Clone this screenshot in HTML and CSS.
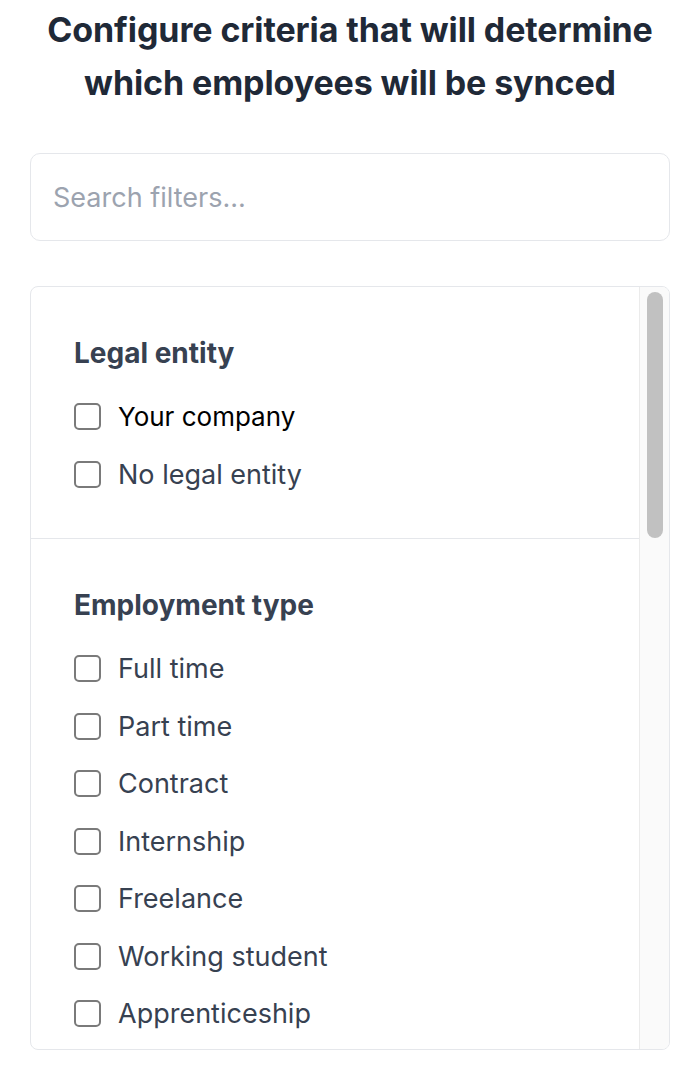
FILE: index.html
```html
<!DOCTYPE html>
<html lang="en">
<head>
<meta charset="utf-8">
<title>Sync criteria</title>
<link rel="stylesheet" href="styles.css">
</head>
<body>
<main class="page">
  <h1 class="title">Configure criteria that will determine which employees will be synced</h1>
  <input class="search" type="text" placeholder="Search filters...">
  <div class="panel">
    <div class="panel-content">
      <section class="group">
        <h2 class="group-title">Legal entity</h2>
        <label class="option option-active"><input type="checkbox" class="box"><span>Your company</span></label>
        <label class="option"><input type="checkbox" class="box"><span>No legal entity</span></label>
      </section>
      <section class="group">
        <h2 class="group-title">Employment type</h2>
        <label class="option"><input type="checkbox" class="box"><span>Full time</span></label>
        <label class="option"><input type="checkbox" class="box"><span>Part time</span></label>
        <label class="option"><input type="checkbox" class="box"><span>Contract</span></label>
        <label class="option"><input type="checkbox" class="box"><span>Internship</span></label>
        <label class="option"><input type="checkbox" class="box"><span>Freelance</span></label>
        <label class="option"><input type="checkbox" class="box"><span>Working student</span></label>
        <label class="option"><input type="checkbox" class="box"><span>Apprenticeship</span></label>
      </section>
    </div>
    <div class="scroll-track"><div class="scroll-thumb"></div></div>
  </div>
</main>
</body>
</html>
```
FILE: styles.css
```css
* { box-sizing: border-box; }
html, body { margin: 0; padding: 0; background: #ffffff; }
body {
  font-family: Inter, "Noto Sans", "Liberation Sans", sans-serif;
  color: #374151;
}
.page {
  padding: 3px 24px 0 30px;
  display: flex;
  flex-direction: column;
}
.title {
  margin: 0;
  font-size: 34px;
  line-height: 53px;
  font-weight: 700;
  color: #1f2937;
  text-align: center;
  padding: 0 8px;
  letter-spacing: -0.1px;
}
.search {
  margin-top: 44px;
  width: 100%;
  height: 88px;
  border: 1px solid #e5e7eb;
  border-radius: 10px;
  padding: 0 22px;
  font-family: inherit;
  font-size: 27px;
  color: #374151;
  outline: none;
  background: #fff;
}
.search::placeholder { color: #9ca3af; }
.panel {
  margin-top: 45px;
  height: 764px;
  border: 1px solid #e5e7eb;
  border-radius: 8px;
  display: flex;
  overflow: hidden;
}
.panel-content {
  flex: 1;
  overflow: hidden;
}
.group {
  padding: 48px 44px 35px 43px;
  border-bottom: 1px solid #e5e7eb;
  display: flex;
  flex-direction: column;
}
.group-title {
  margin: 0 0 17px 0;
  font-size: 28px;
  line-height: 36px;
  font-weight: 700;
  color: #374151;
}
.option {
  height: 57.5px;
  display: flex;
  align-items: center;
  gap: 17px;
  font-size: 27px;
  color: #374151;
}
.option-active { color: #000000; font-size: 26px; }
.box {
  appearance: none;
  -webkit-appearance: none;
  margin: 0;
  width: 27px;
  height: 27px;
  border: 2px solid #7a7a7a;
  border-radius: 5px;
  background: #fff;
  flex: none;
}
.scroll-track {
  width: 30px;
  flex: none;
  background: #fafafa;
  border-left: 1px solid #ebebeb;
  padding: 5px 6px 0 7px;
}
.scroll-thumb {
  width: 16px;
  height: 246px;
  border-radius: 8px;
  background: #c1c1c1;
}
```
